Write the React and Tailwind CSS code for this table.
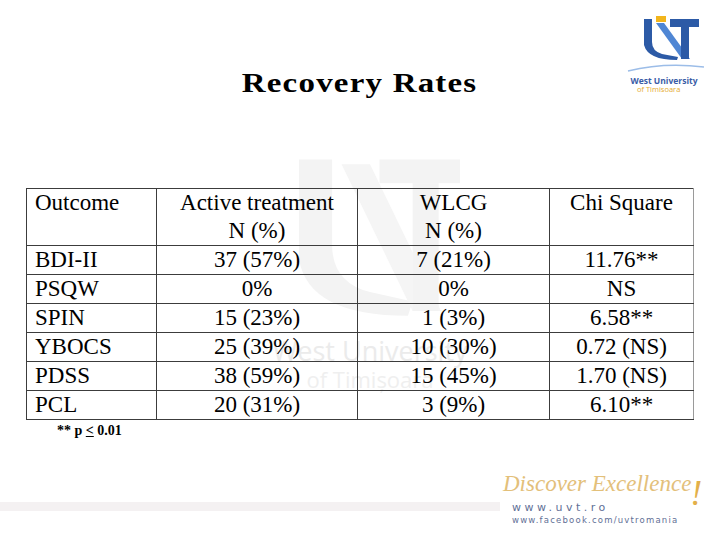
import React from "react";

const rows = [
  ["BDI-II", "37 (57%)", "7 (21%)", "11.76**", "h-[29px]"],
  ["PSQW", "0%", "0%", "NS", "h-[28px]"],
  ["SPIN", "15 (23%)", "1 (3%)", "6.58**", "h-[29px]"],
  ["YBOCS", "25 (39%)", "10 (30%)", "0.72 (NS)", "h-[29px]"],
  ["PDSS", "38 (59%)", "15 (45%)", "1.70 (NS)", "h-[28px]"],
  ["PCL", "20 (31%)", "3 (9%)", "6.10**", "h-[28px]"],
];

const serif = { fontFamily: "'Liberation Serif', 'Times New Roman', serif" };
const sans = { fontFamily: "'Open Sans', sans-serif" };

function UvtLogo() {
  return (
    <div className="flex flex-col items-center w-[80px]">
      <svg width="80" height="62" viewBox="0 0 80 62">
        <path d="M20 8 H28 V31 Q28 40 38 43 L54 46 L53 49 Q24 49 20 34 Z" fill="#2c5aa6" />
        <polygon points="32,12 40,12 66,48 58,48" fill="#4f86d4" />
        <rect x="32" y="5" width="10" height="6" fill="#f2b51c" />
        <rect x="46" y="8" width="29" height="8" fill="#2c5aa6" />
        <rect x="57" y="16" width="8" height="32" fill="#2c5aa6" />
        <path d="M4 60 Q40 51 80 56" stroke="#9cbde8" strokeWidth="1.5" fill="none" />
      </svg>
      <div className="text-[8.5px] leading-[9px] font-bold text-[#3a5ca6] mt-[3px]" style={sans}>
        West University
      </div>
      <div className="text-[7.5px] leading-[9px] text-[#e5ab2e] self-start pl-[13px]" style={sans}>
        of Timisoara
      </div>
    </div>
  );
}

function Watermark() {
  return (
    <div className="absolute left-[270px] top-[150px] w-[200px] flex flex-col items-center pointer-events-none">
      <svg width="190" height="180" viewBox="0 0 80 76">
        <path d="M10 4 H24 V40 Q24 56 40 60 L58 64 L56 70 Q14 70 10 46 Z" fill="#f3f3f3" />
        <polygon points="28,6 40,6 70,68 58,68" fill="#f5f5f5" />
        <rect x="44" y="4" width="34" height="10" fill="#f3f3f3" />
        <rect x="58" y="14" width="11" height="54" fill="#f3f3f3" />
      </svg>
      <div className="text-[27px] leading-[30px] text-[#ebebeb] mt-[6px]" style={sans}>
        West University
      </div>
      <div className="text-[22px] leading-[26px] text-[#efefef]" style={sans}>
        of Timișoara
      </div>
    </div>
  );
}

export default function App() {
  const cell = "border border-[#3c3c3c] p-0";
  return (
    <div className="relative w-[720px] h-[540px] bg-white overflow-hidden flex flex-col" style={serif}>
      <Watermark />

      <div className="relative h-[188px] grid grid-cols-[1fr_auto_1fr] items-start">
        <div />
        <h1 className="mt-[67px] text-[27px] leading-[32px] font-bold text-black tracking-[1px] scale-x-[1.22]" style={serif}>
          Recovery Rates
        </h1>
        <div className="flex justify-end pt-[11px] pr-[16px]">
          <UvtLogo />
        </div>
      </div>

      <div className="relative pl-[26px]">
        <table className="border-collapse text-[23px] leading-[28px] text-black w-[667px] table-fixed" style={serif}>
          <colgroup>
            <col className="w-[130px]" />
            <col className="w-[201px]" />
            <col className="w-[192px]" />
            <col className="w-[144px]" />
          </colgroup>
          <thead>
            <tr className="h-[57px]">
              <th className={`${cell} font-normal text-left align-top pl-[8px]`}>Outcome</th>
              <th className={`${cell} font-normal text-center align-top`}>
                Active treatment
                <br />
                N (%)
              </th>
              <th className={`${cell} font-normal text-center align-top`}>
                WLCG
                <br />
                N (%)
              </th>
              <th className={`${cell} font-normal text-center align-top border-r-[#9a9a9a]`}>Chi Square</th>
            </tr>
          </thead>
          <tbody>
            {rows.map(([name, a, w, c, h]) => (
              <tr key={name} className={h}>
                <td className={`${cell} pl-[8px]`}>{name}</td>
                <td className={`${cell} text-center`}>{a}</td>
                <td className={`${cell} text-center`}>{w}</td>
                <td className={`${cell} text-center border-r-[#9a9a9a]`}>{c}</td>
              </tr>
            ))}
          </tbody>
        </table>
        <div className="pl-[31px] mt-[3px] text-[14px] leading-[16px] font-bold text-black" style={serif}>
          ** p <span className="underline">&lt;</span> 0.01
        </div>
      </div>

      <div className="relative mt-auto h-[72px] flex items-start">
        <div className="w-[500px] h-[9px] bg-[#f4f1f2] mt-[34px]" />
        <div className="flex flex-col pl-[3px] pt-[3px]">
          <div className="flex items-start h-[28px]">
            <span className="text-[23px] leading-[26px] italic text-[#e3c07a]" style={serif}>
              Discover Excellence
            </span>
            <span className="text-[36px] leading-[36px] italic text-[#e3b04a] -ml-[1px] mt-[4px]" style={serif}>
              !
            </span>
          </div>
          <div className="pl-[9px] mt-[3px] text-[11px] leading-[12px] tracking-[3.5px] text-[#5f7096]" style={{ fontFamily: "'DejaVu Sans', sans-serif" }}>
            www.uvt.ro
          </div>
          <div className="pl-[9px] mt-[1px] text-[8.5px] leading-[11px] tracking-[1.2px] text-[#5f7096]" style={{ fontFamily: "'DejaVu Sans', sans-serif" }}>
            www.facebook.com/uvtromania
          </div>
        </div>
      </div>
    </div>
  );
}
